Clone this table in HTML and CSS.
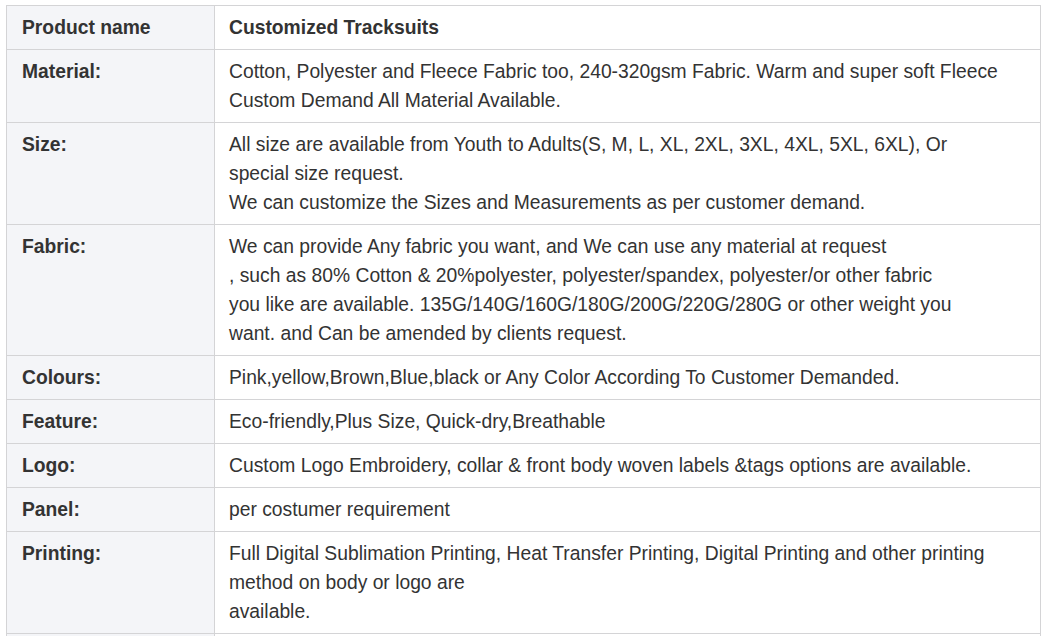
FILE: index.html
```html
<!DOCTYPE html>
<html>
<head>
<meta charset="utf-8">
<link rel="stylesheet" href="styles.css">
</head>
<body>
<table class="spec">
  <colgroup><col class="c1"><col class="c2"></colgroup>
  <tr><th>Product name</th><th>Customized Tracksuits</th></tr>
  <tr><th>Material:</th><td>Cotton, Polyester and Fleece Fabric too, 240-320gsm Fabric. Warm and super soft Fleece<br>Custom Demand All Material Available.</td></tr>
  <tr><th>Size:</th><td>All size are available from Youth to Adults(S, M, L, XL, 2XL, 3XL, 4XL, 5XL, 6XL), Or<br>special size request.<br>We can customize the Sizes and Measurements as per customer demand.</td></tr>
  <tr><th>Fabric:</th><td>We can provide Any fabric you want, and We can use any material at request<br>, such as 80% Cotton &amp; 20%polyester, polyester/spandex, polyester/or other fabric<br>you like are available. 135G/140G/160G/180G/200G/220G/280G or other weight you<br>want. and Can be amended by clients request.</td></tr>
  <tr><th>Colours:</th><td>Pink,yellow,Brown,Blue,black or Any Color According To Customer Demanded.</td></tr>
  <tr><th>Feature:</th><td>Eco-friendly,Plus Size, Quick-dry,Breathable</td></tr>
  <tr><th>Logo:</th><td>Custom Logo Embroidery, collar &amp; front body woven labels &amp;tags options are available.</td></tr>
  <tr><th>Panel:</th><td>per costumer requirement</td></tr>
  <tr><th>Printing:</th><td>Full Digital Sublimation Printing, Heat Transfer Printing, Digital Printing and other printing<br>method on body or logo are<br>available.</td></tr>
  <tr><th></th><td></td></tr>
</table>
</body>
</html>
```

FILE: styles.css
```css
html, body { margin: 0; padding: 0; background: #fff; }
body { padding: 5px 0 0 6px; font-family: "Liberation Sans", Arial, sans-serif; color: #333; }
.spec { border-collapse: collapse; width: 1035px; table-layout: fixed; font-size: 19.3px; line-height: 29px; }
.c1 { width: 208px; }
.spec th, .spec td { border: 1px solid #d4d4d6; padding: 7px 10px 7px 15px; vertical-align: top; text-align: left; white-space: nowrap; }
.spec th { font-weight: bold; background: #f4f5f8; }
.spec tr:first-child th:last-child { background: #fff; }
.spec td { background: #fff; font-weight: normal; }
.spec th + td, .spec th + th { padding-left: 14px; }
```
